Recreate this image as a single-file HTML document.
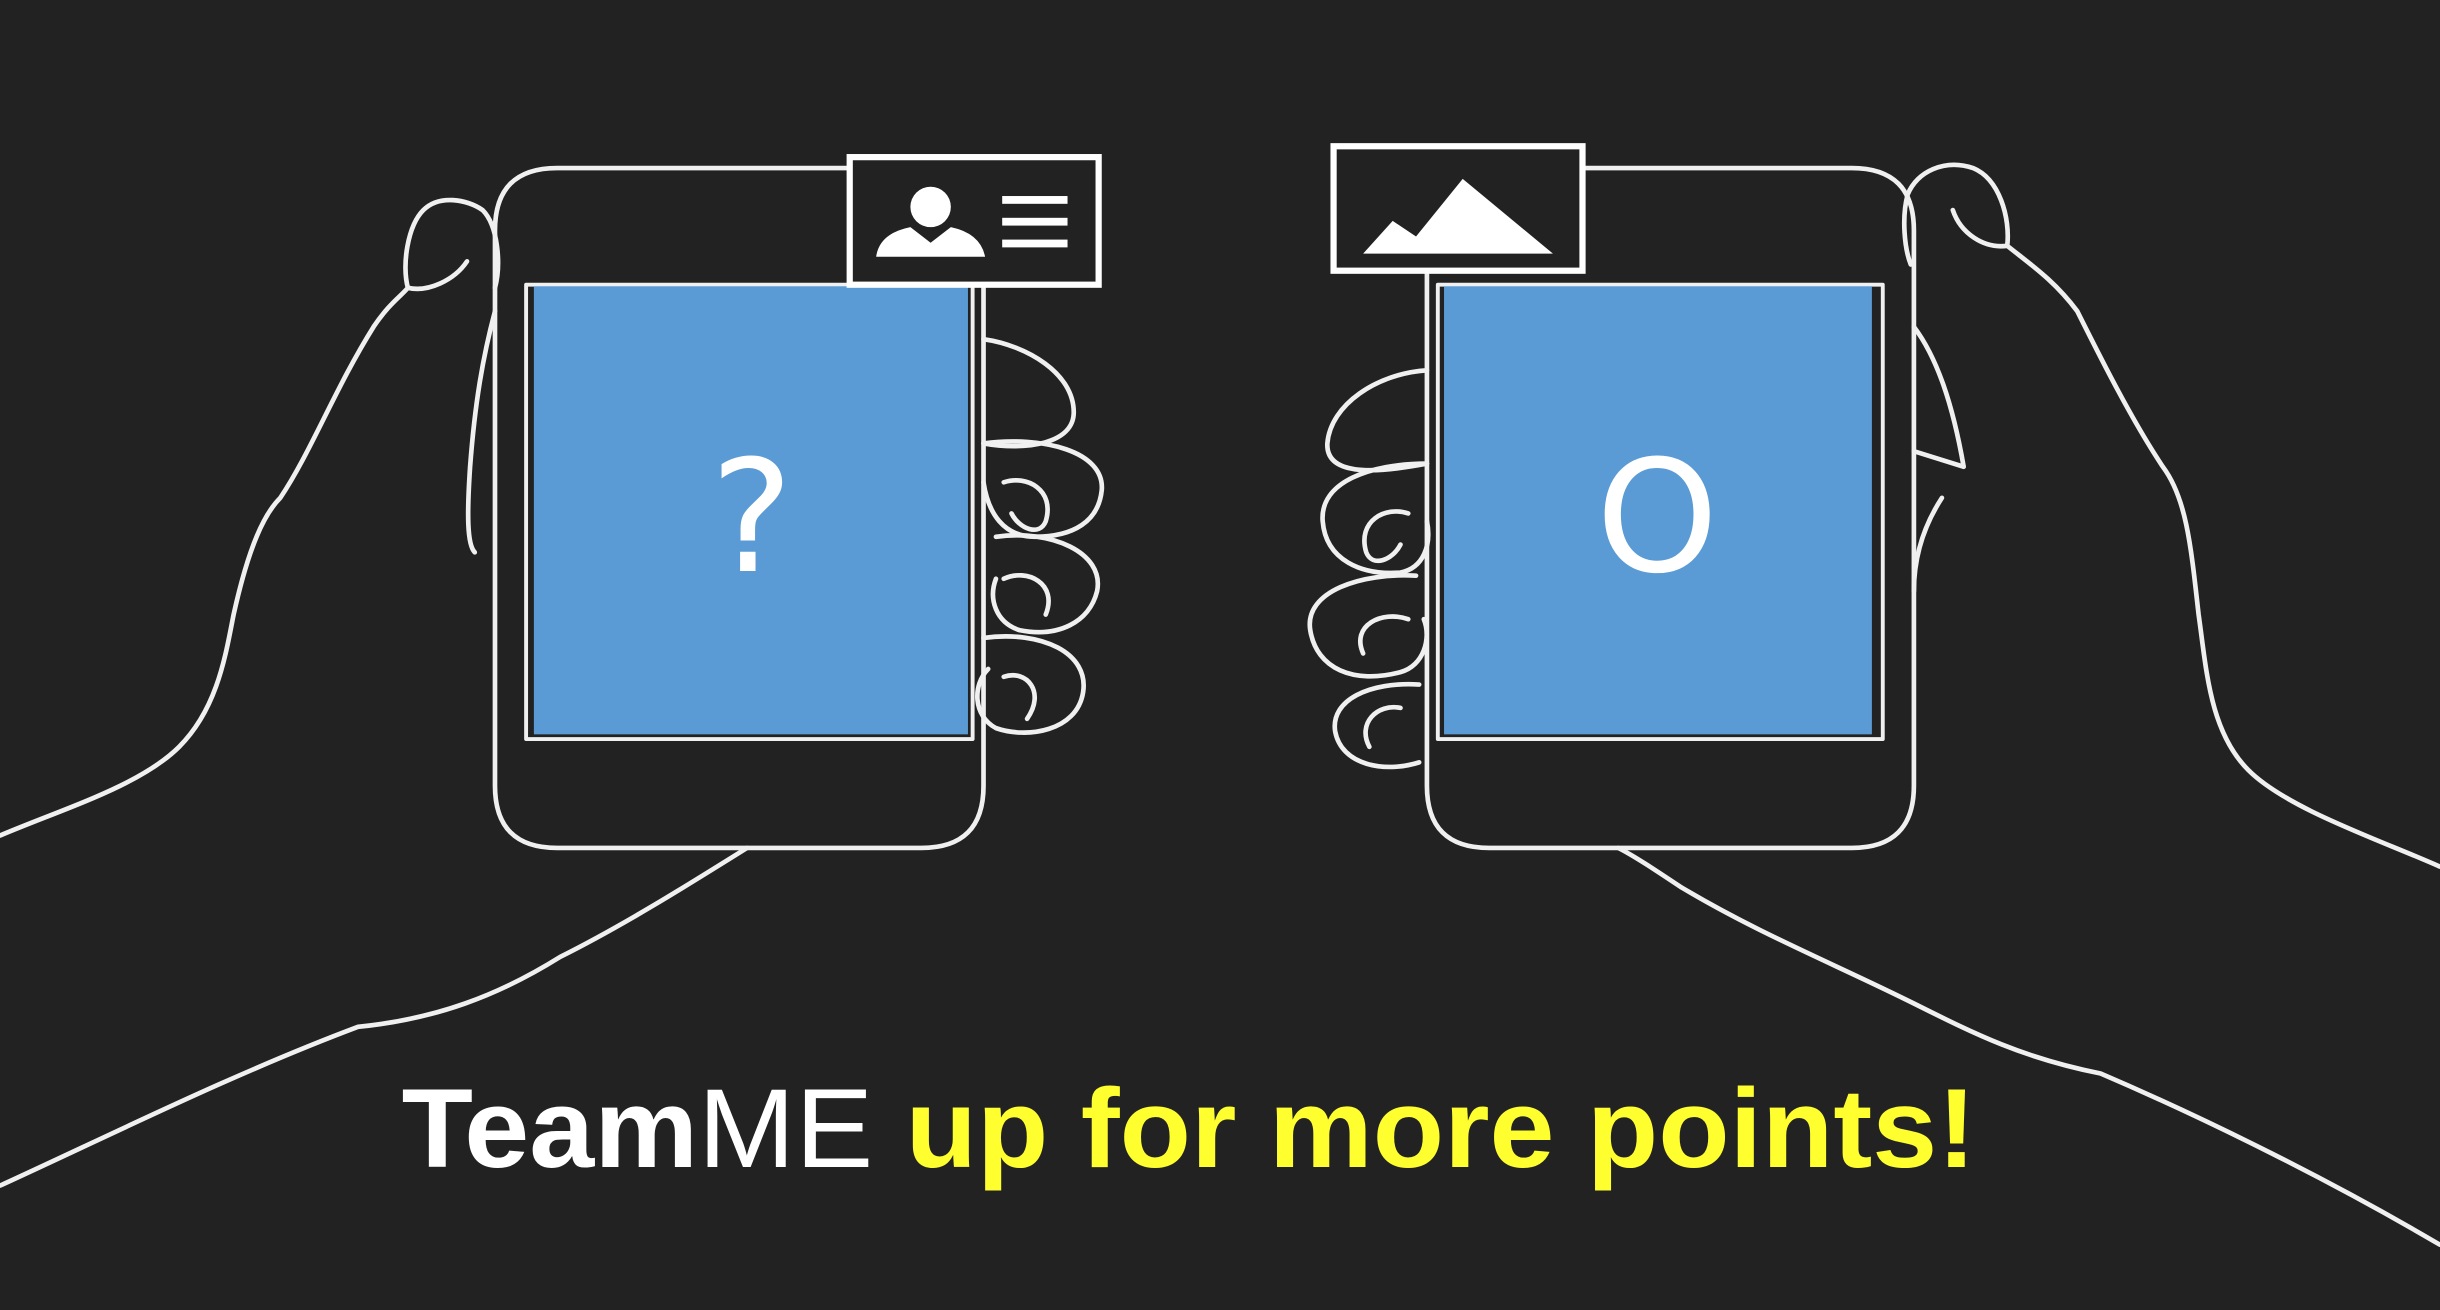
<!DOCTYPE html>
<html><head><meta charset="utf-8"><style>
html,body{margin:0;padding:0;background:#222;}
svg{display:block}
</style></head><body>
<svg width="2440" height="1310" viewBox="0 0 1568 842" xmlns="http://www.w3.org/2000/svg">
<rect width="1568" height="842" fill="#222222"/>
<g fill="none" stroke="#f0f0f0" stroke-width="3" stroke-linejoin="round" stroke-linecap="round">
<path d="M0 537 C40 520 90 505 115 480 C140 455 145 420 150 395 C160 350 170 330 180 320 C200 290 215 250 240 210 C250 195 258 190 262 185 C258 170 262 145 272 135 C282 125 300 128 310 135 C320 145 322 170 318 185"/>
<path d="M262 185 C275 188 292 180 300 168"/>
<path d="M318 200 C310 230 305 260 302 300 C300 330 300 350 305 355"/>
<path d="M0 762 C70 730 150 690 230 660 C280 655 320 640 360 615 C400 595 440 570 480 545"/>
<path d="M632 218 C660 222 690 240 690 265 C690 285 660 290 632 285"/>
<path d="M632 285 C670 280 710 290 708 315 C706 335 690 345 665 345 C645 345 635 330 632 310"/>
<path d="M645 310 C660 305 678 315 672 335 C668 345 655 340 650 330"/>
<path d="M640 345 C675 340 710 355 705 380 C700 400 680 410 655 405 C640 400 635 385 640 372"/>
<path d="M645 372 C660 365 680 375 672 395"/>
<path d="M632 410 C670 405 700 420 696 445 C692 470 660 475 640 468 C625 460 625 440 635 430"/>
<path d="M645 435 C660 430 672 445 660 462"/>
<path d="M358 108 L592 108 Q632 108 632 148 L632 505 Q632 545 592 545 L358 545 Q318 545 318 505 L318 148 Q318 108 358 108 Z"/>
<path d="M338 183 L625 183 L625 475 L338 475 Z" stroke-width="2.5"/>
<path d="M1568 557 C1530 540 1470 520 1445 495 C1420 470 1418 430 1413 395 C1408 350 1405 320 1390 300 C1370 270 1350 230 1335 200 C1320 180 1305 170 1290 158 C1292 140 1285 115 1268 108 C1250 102 1232 110 1226 125 C1222 140 1224 160 1228 170"/>
<path d="M1290 158 C1275 160 1260 150 1255 135"/>
<path d="M1230 210 C1245 230 1255 260 1262 300 L1230 290"/>
<path d="M1248 320 C1235 340 1230 360 1230 380"/>
<path d="M1568 800 C1500 760 1420 720 1350 690 C1300 680 1270 665 1230 645 C1180 620 1130 600 1080 570 C1065 560 1050 550 1040 545"/>
<path d="M917 238 C885 240 855 260 853 285 C852 305 880 305 917 298"/>
<path d="M917 298 C880 298 848 310 850 335 C852 360 875 370 900 368 C915 365 920 350 917 335"/>
<path d="M905 330 C890 325 872 335 878 355 C882 365 895 360 900 350"/>
<path d="M910 370 C875 368 838 380 842 405 C846 430 870 440 900 432 C915 428 920 410 915 398"/>
<path d="M905 398 C888 392 868 402 876 420"/>
<path d="M912 440 C880 438 855 450 858 470 C862 492 890 497 912 490"/>
<path d="M900 455 C885 452 872 465 880 480"/>
<path d="M957 108 L1190 108 Q1230 108 1230 148 L1230 505 Q1230 545 1190 545 L957 545 Q917 545 917 505 L917 148 Q917 108 957 108 Z"/>
<path d="M924 183 L1210 183 L1210 475 L924 475 Z" stroke-width="2.5"/>
</g>
<rect x="343" y="184" width="279" height="288" fill="#5b9bd5"/>
<rect x="928" y="184" width="275" height="288" fill="#5b9bd5"/>
<text x="483" y="367" text-anchor="middle" font-family="DejaVu Sans, sans-serif" font-size="100" fill="#fff">?</text>
<text x="1065" y="367" text-anchor="middle" font-family="DejaVu Sans, sans-serif" font-size="100" fill="#fff">O</text>
<rect x="546" y="101" width="160" height="82" fill="#222" stroke="#fff" stroke-width="4"/>
<circle cx="598" cy="133" r="13" fill="#fff"/>
<path d="M563 165 Q565 150 585 146 L598 156 L611 146 Q630 150 633 165 Z" fill="#fff"/>
<rect x="644" y="126" width="42" height="5" fill="#fff"/>
<rect x="644" y="140" width="42" height="5" fill="#fff"/>
<rect x="644" y="154" width="42" height="5" fill="#fff"/>
<rect x="857" y="94" width="160" height="80" fill="#222" stroke="#fff" stroke-width="4"/>
<path d="M876 163 L895 142 L910 152 L940 115 L998 163 Z" fill="#fff"/>
<text x="258" y="750" textLength="1012" lengthAdjust="spacingAndGlyphs" font-family="Liberation Sans, sans-serif" font-size="72" font-weight="bold" fill="#fff">Team<tspan font-weight="normal">ME</tspan><tspan fill="#ffff30"> up for more points!</tspan></text>
</svg>
</body></html>
